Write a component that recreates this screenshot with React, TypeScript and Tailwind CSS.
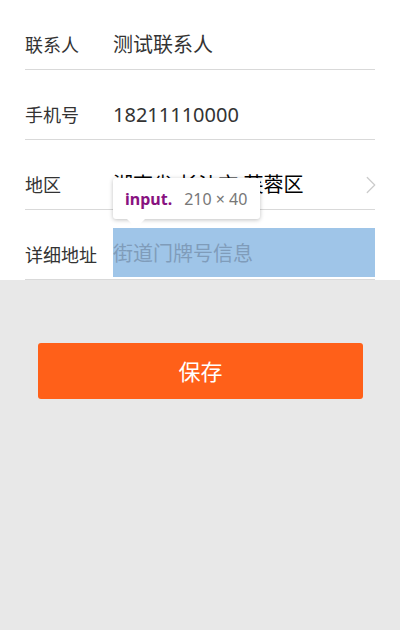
import React from "react";
import { ChevronRight } from "lucide-react";

const FONT = "font-['Noto_Sans','Noto_Sans_CJK_SC',sans-serif]";

const Row: React.FC<{ label: string; children: React.ReactNode }> = ({ label, children }) => (
  <div className="h-[70px] pt-[20px] border-b border-[#d9d9d9] flex">
    <div className="w-[88px] h-[50px] flex items-center text-[18px] text-[#333]">{label}</div>
    <div className="flex-1 h-[50px] flex items-center relative">{children}</div>
  </div>
);

export default function App() {
  return (
    <div className={`${FONT} min-h-[630px] bg-[#e8e8e8]`}>
      <div className="bg-white px-[25px]">
        <Row label="联系人">
          <span className="text-[20px] text-[#333]">测试联系人</span>
        </Row>
        <Row label="手机号">
          <span className="text-[20px] text-[#333]">18211110000</span>
        </Row>
        <Row label="地区">
          <span className="text-[20px] text-black whitespace-pre">湖南省 长沙市 芙蓉区</span>
          <ChevronRight size={30} strokeWidth={1} className="ml-auto -mr-[11px] text-[#cccccc]" />
          {/* devtools inspect tooltip */}
          <div className="absolute left-0 top-[18px] z-10 w-[147px] h-[41px] rounded-[3px] bg-white shadow-[0_1px_4px_rgba(0,0,0,0.25)] flex items-center pl-[12px] gap-[12px] text-[16px]">
            <span className="font-bold text-[#881280]">input.</span>
            <span className="text-[#777]">210 × 40</span>
            <div className="absolute left-[14px] -bottom-[9px] w-0 h-0 border-l-[9px] border-r-[9px] border-t-[9px] border-l-transparent border-r-transparent border-t-white" />
          </div>
        </Row>
        <Row label="详细地址">
          <input
            className="w-full self-start -mt-[2px] h-[49px] pt-[2px] bg-[#9fc5e8] outline-none text-[20px] text-[#333] placeholder:text-[#7f9cba]"
            placeholder="街道门牌号信息"
          />
        </Row>
      </div>
      <div className="pl-[38px] pt-[63px]">
        <button className="w-[325px] h-[56px] rounded-[3px] bg-[#ff6019] text-white text-[22px]">
          保存
        </button>
      </div>
    </div>
  );
}
